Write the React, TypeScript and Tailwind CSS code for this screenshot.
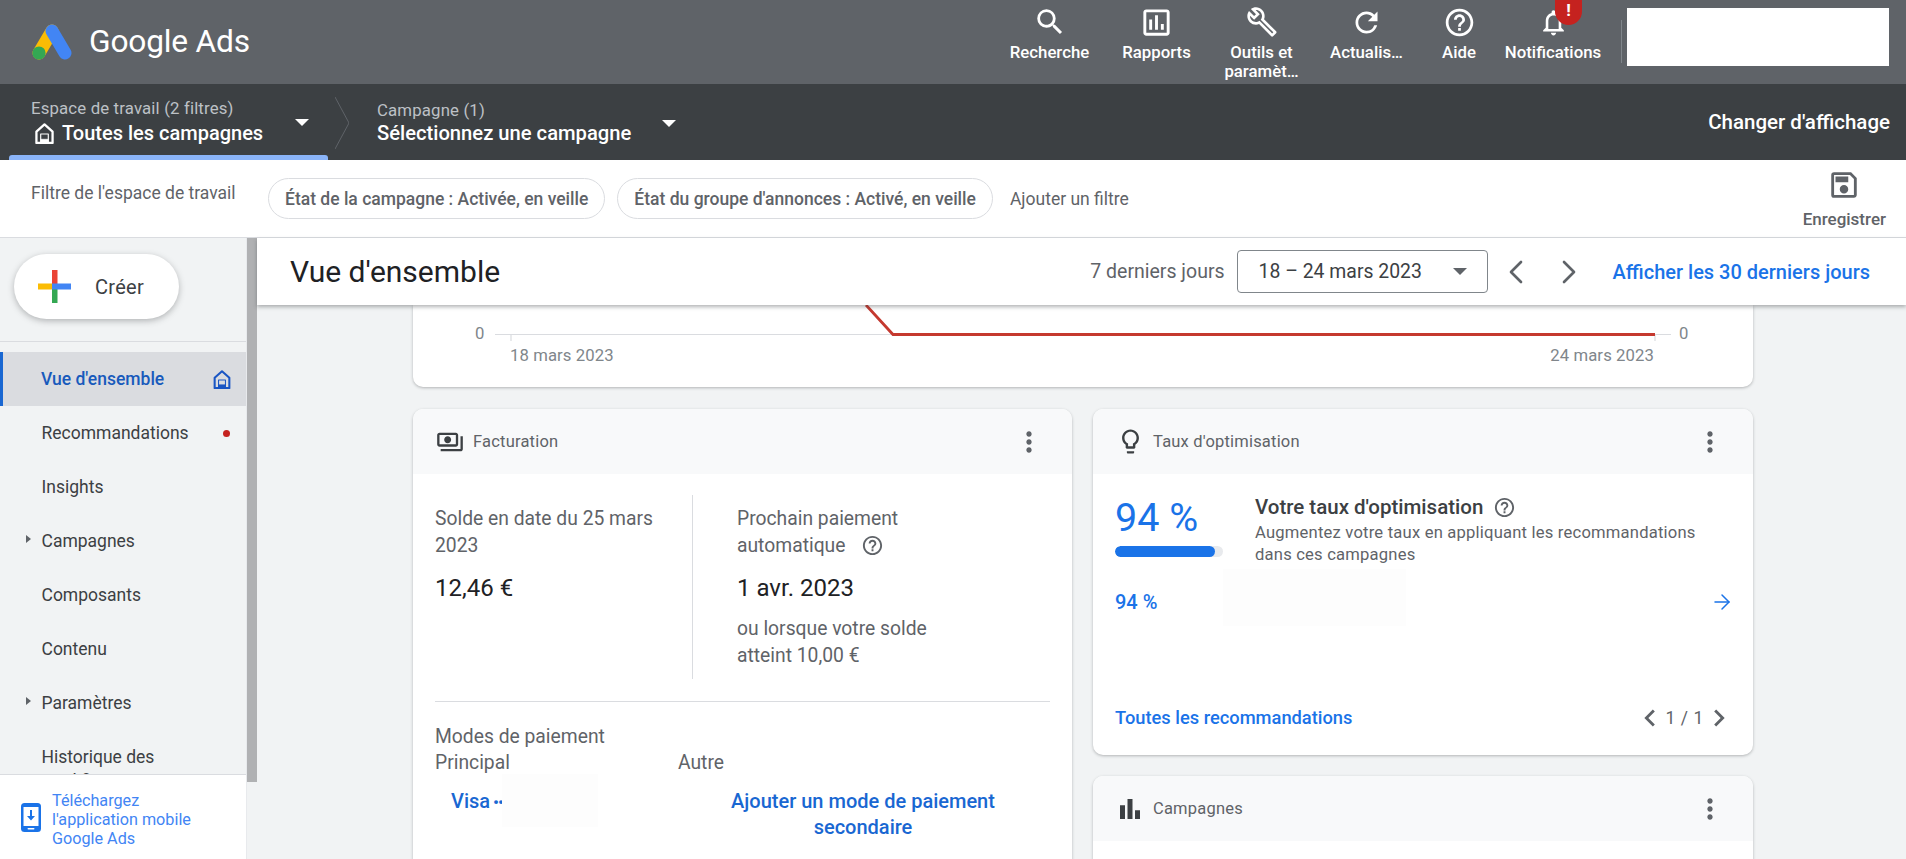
import {
  MdSearch,
  MdOutlineAssessment,
  MdOutlineBuild,
  MdRefresh,
  MdHelpOutline,
  MdNotificationsNone,
  MdOutlineSave,
  MdMoreVert,
  MdLightbulbOutline,
  MdBarChart,
  MdOutlinePayments,
  MdChevronLeft,
  MdChevronRight,
} from "react-icons/md";
import { ArrowRight, ChevronLeft, ChevronRight } from "lucide-react";
import type { ReactNode } from "react";

const topActions = [
  { label: "Recherche", icon: <MdSearch className="w-[34px] h-[34px]" />, w: "w-[107px]" },
  { label: "Rapports", icon: <MdOutlineAssessment className="w-[35px] h-[35px]" />, w: "w-[107px]" },
  { label: "Outils et paramèt…", icon: <MdOutlineBuild className="w-[32px] h-[32px]" />, w: "w-[103px]" },
  { label: "Actualis…", icon: <MdRefresh className="w-[33px] h-[33px]" />, w: "w-[107px]" },
  { label: "Aide", icon: <MdHelpOutline className="w-[33px] h-[33px]" />, w: "w-[78px]" },
];

const navItems = [
  { label: "Recommandations", dot: true },
  { label: "Insights" },
  { label: "Campagnes", arrow: true },
  { label: "Composants" },
  { label: "Contenu" },
  { label: "Paramètres", arrow: true },
  { label: "Historique des modifications" },
];

function Caret({ className }: { className: string }) {
  return <span className={`w-0 h-0 border-x-[7px] border-x-transparent border-t-[7px] ${className}`} />;
}

function HomeIcon({ className }: { className: string }) {
  return (
    <svg viewBox="2 1 20 22" className={className} fill="none" stroke="currentColor" strokeLinejoin="round">
      <path d="M12 2.5 3.5 10v12h17V10z" strokeWidth="2.4" />
      <path d="M8 21v-8.5h8V21" strokeWidth="1.2" />
      <path d="M8 18h8v4H8z" fill="currentColor" strokeWidth="0.5" />
    </svg>
  );
}

function GoogleAdsLogo() {
  return (
    <svg viewBox="0 0 40 36" className="w-[40px] h-[36px]">
      <line x1="20" y1="7" x2="7" y2="29" stroke="#fbbc04" strokeWidth="13" strokeLinecap="round" />
      <line x1="20" y1="7" x2="33" y2="29" stroke="#4285f4" strokeWidth="13" strokeLinecap="round" />
      <circle cx="7" cy="29" r="6.6" fill="#34a853" />
    </svg>
  );
}

function PlusIcon() {
  return (
    <svg viewBox="0 0 33 33" className="w-[33px] h-[33px]">
      <rect x="0" y="13.5" width="14" height="6" fill="#fbbc04" />
      <rect x="14" y="0" width="5.5" height="14" fill="#ea4335" />
      <rect x="14" y="19" width="5.5" height="14" fill="#34a853" />
      <rect x="14" y="13.5" width="19" height="6" fill="#4285f4" />
    </svg>
  );
}

function PhoneDownloadIcon() {
  return (
    <svg viewBox="0 0 20 29" className="w-[20px] h-[29px] shrink-0">
      <rect width="20" height="29" rx="3.5" fill="#1a73e8" />
      <rect x="2.5" y="4" width="15" height="19" fill="#fff" />
      <path d="M9 7h2v6h3l-4 4.5L6 13h3z" fill="#1a73e8" />
      <rect x="6.5" y="25" width="7" height="1.6" rx="0.8" fill="#fff" />
    </svg>
  );
}

function TopBar() {
  return (
    <div className="h-[84px] bg-[#5f6368] flex items-start shrink-0">
      <div className="flex items-center pl-[32px] pt-[23px] gap-[17px]">
        <GoogleAdsLogo />
        <span className="text-[31.7px] leading-[38px] text-white tracking-[-0.2px]">Google Ads</span>
      </div>
      <div className="ml-auto flex items-start">
        {topActions.map((a) => (
          <div key={a.label} className={`${a.w} flex flex-col items-center text-white pt-[5px]`}>
            <span className="h-[34px] flex items-center">{a.icon}</span>
            <span className="mt-[4px] text-[16.8px] leading-[19px] font-medium text-center px-[4px]">{a.label}</span>
          </div>
        ))}
        <div className="relative w-[110px] flex flex-col items-center text-white pt-[5px]">
          <span className="h-[34px] flex items-center">
            <MdNotificationsNone className="w-[31px] h-[31px]" />
          </span>
          <span className="mt-[4px] text-[16.8px] leading-[19px] font-medium">Notifications</span>
          <span className="absolute left-[57px] top-0 w-[27px] h-[25px] rounded-b-full rounded-t-[10px] bg-[#c5221f] text-white text-[17px] font-bold leading-[20px] text-center">!</span>
        </div>
        <div className="w-px h-[43px] bg-[#80868b] mt-[20px] ml-[13px]" />
        <div className="w-[262px] h-[58px] bg-white mt-[8px] ml-[5px] mr-[17px]" />
      </div>
    </div>
  );
}

function WorkspaceBar() {
  return (
    <div className="h-[76px] bg-[#3c4043] flex items-start shrink-0 text-white">
      <div className="relative w-[319px] h-full ml-[9px]">
        <div className="pl-[22px] pt-[13px]">
          <div className="text-[16.8px] leading-[22px] text-[#bdc1c6] tracking-[0.15px]">Espace de travail (2 filtres)</div>
          <div className="flex items-center gap-[8px] pl-[4px] mt-[1px]">
            <HomeIcon className="w-[19px] h-[21px]" />
            <span className="text-[20px] leading-[26px] font-medium">Toutes les campagnes</span>
          </div>
        </div>
        <Caret className="absolute left-[286px] top-[35px] border-t-white" />
        <div className="absolute left-0 right-0 bottom-0 h-[5px] bg-[#8ab4f8] rounded-t-[3px]" />
      </div>
      <svg viewBox="0 0 14 52" className="w-[14px] h-[52px] mt-[13px] ml-[7px]" fill="none" stroke="#5f6368" strokeWidth="1">
        <path d="M0 0 L14 26 L0 52" />
      </svg>
      <div className="pl-[28px] pt-[15px]">
        <div className="text-[16.8px] leading-[22px] text-[#bdc1c6] tracking-[0.15px]">Campagne (1)</div>
        <div className="text-[20.2px] leading-[26px] font-medium -mt-[1px]">Sélectionnez une campagne</div>
      </div>
      <Caret className="mt-[36px] ml-[31px] border-t-white" />
      <span className="ml-auto mr-[16px] mt-[25px] text-[20.5px] leading-[26px] font-medium">Changer d'affichage</span>
    </div>
  );
}

function Chip({ children }: { children: ReactNode }) {
  return (
    <span className="h-[41px] rounded-full border border-[#dadce0] px-[16px] pt-[1px] flex items-center text-[17.5px] font-medium text-[#5f6368] whitespace-nowrap">
      {children}
    </span>
  );
}

function FilterBar() {
  return (
    <div className="h-[78px] bg-white border-b border-[#dadce0] flex items-start shrink-0">
      <span className="ml-[31px] mt-[22px] w-[237px] text-[17.5px] leading-[22px] text-[#5f6368] whitespace-nowrap">Filtre de l'espace de travail</span>
      <div className="flex items-center gap-[12px] mt-[18px]">
        <Chip>État de la campagne : Activée, en veille</Chip>
        <Chip>État du groupe d'annonces : Activé, en veille</Chip>
        <span className="ml-[5px] pt-[1px] text-[17.5px] text-[#5f6368]">Ajouter un filtre</span>
      </div>
      <div className="ml-auto mr-[20px] flex flex-col items-center text-[#5f6368] pt-[8px]">
        <MdOutlineSave className="w-[34px] h-[34px]" />
        <span className="mt-[7px] text-[17px] leading-[20px] font-medium">Enregistrer</span>
      </div>
    </div>
  );
}

function Sidebar() {
  return (
    <aside className="w-[247px] shrink-0 bg-[#f1f3f4] flex flex-col border-r border-[#e8eaed]">
      <div className="h-[104px] shrink-0 border-b border-[#dadce0] pl-[14px] pt-[16px]">
        <div className="w-[165px] h-[65px] bg-white rounded-full shadow-[0_2px_6px_rgba(60,64,67,.35)] flex items-center pl-[24px] gap-[24px]">
          <PlusIcon />
          <span className="text-[20px] tracking-[0.3px] text-[#3c4043]">Créer</span>
        </div>
      </div>
      <nav className="flex-1 overflow-hidden pt-[10px] text-[17.5px] text-[#3c4043]">
        <div className="h-[54px] bg-[#dadce0] border-l-[3.5px] border-[#1967d2] flex items-center pl-[38px] pr-[15px] text-[#185abc] font-medium">
          <span className="flex-1">Vue d'ensemble</span>
          <HomeIcon className="w-[18px] h-[19px] text-[#1a56c4]" />
        </div>
        {navItems.map((item) => (
          <div key={item.label} className="relative h-[54px] flex items-start pl-[41.5px] pr-[15px] pt-[15px]">
            {item.arrow && (
              <span className="absolute left-[26px] top-[21px] w-0 h-0 border-y-[4.5px] border-y-transparent border-l-[5px] border-l-[#5f6368]" />
            )}
            <span className="flex-1 leading-[24px]">{item.label}</span>
            {item.dot && <span className="w-[7px] h-[7px] rounded-full bg-[#c5221f] mr-[1px] mt-[9px]" />}
          </div>
        ))}
      </nav>
      <div className="h-[85px] shrink-0 bg-white border-t border-[#dadce0] flex items-center pl-[21px] gap-[11px]">
        <PhoneDownloadIcon />
        <span className="text-[16.2px] leading-[19px] text-[#4285f4] mt-[5px]">
          Téléchargez
          <br />
          l'application mobile
          <br />
          Google Ads
        </span>
      </div>
    </aside>
  );
}

function CardHeader({ icon, title }: { icon: ReactNode; title: string }) {
  return (
    <div className="h-[65px] bg-[#f8f9fa] flex items-center pl-[22px] pr-[27px] shrink-0">
      <span className="w-[30px] flex justify-center text-[#3c4043]">{icon}</span>
      <span className="ml-[8px] flex-1 text-[16.5px] text-[#5f6368] tracking-[0.2px] pt-[1px]">{title}</span>
      <MdMoreVert className="w-[32px] h-[32px] text-[#5f6368]" />
    </div>
  );
}

function ChartCard() {
  return (
    <div className="h-[82px] bg-white rounded-b-[10px] shadow-[0_1px_3px_rgba(60,64,67,.35)] text-[#80868b] text-[16.7px] shrink-0 pl-[62px] pr-[64px]">
      <div className="flex h-[42px]">
        <span className="w-[20px] pt-[19px] leading-[20px]">0</span>
        <svg viewBox="0 0 1176 42" className="flex-1 h-[42px]" fill="none">
          <path d="M0 29.5 H1176 M16 29 V36 M1160 29 V36" stroke="#dadce0" strokeWidth="1.2" />
          <path d="M371 1 L398 30.5 H1160" stroke="#4285f4" strokeWidth="1" opacity="0.6" />
          <path d="M371 0 L398 29.5 H1160" stroke="#c5392f" strokeWidth="2.8" />
        </svg>
        <span className="w-[18px] pl-[8px] pt-[19px] leading-[20px]">0</span>
      </div>
      <div className="flex justify-between pl-[35px] pr-[35px] leading-[20px] -mt-[1px] tracking-[0.1px]">
        <span>18 mars 2023</span>
        <span>24 mars 2023</span>
      </div>
    </div>
  );
}

function BillingCard() {
  return (
    <div className="w-[659px] h-[600px] bg-white rounded-[10px] shadow-[0_1px_3px_rgba(60,64,67,.35)] overflow-hidden shrink-0">
      <CardHeader icon={<MdOutlinePayments className="w-[28px] h-[28px]" />} title="Facturation" />
      <div className="px-[22px] pt-[21px]">
        <div className="flex h-[184px]">
          <div className="w-[258px] pt-[10px] border-r border-[#dadce0] pr-[20px]">
            <div className="text-[19.3px] leading-[27px] text-[#5f6368]">Solde en date du 25 mars 2023</div>
            <div className="mt-[14px] text-[24px] leading-[30px] text-[#202124]">12,46 €</div>
          </div>
          <div className="pl-[44px] pt-[10px] w-[284px]">
            <div className="text-[19.3px] leading-[27px] text-[#5f6368]">
              Prochain paiement
              <br />
              automatique
              <MdHelpOutline className="inline w-[23px] h-[23px] ml-[16px] -mt-[2px]" />
            </div>
            <div className="mt-[14px] text-[24px] leading-[30px] text-[#202124]">1 avr. 2023</div>
            <div className="mt-[12px] text-[19.3px] leading-[27px] text-[#5f6368]">ou lorsque votre solde atteint 10,00 €</div>
          </div>
        </div>
        <div className="mt-[22px] border-t border-[#dadce0] pt-[22px] text-[19.3px] leading-[26px] text-[#5f6368]">
          <div>Modes de paiement</div>
          <div className="flex">
            <span className="w-[243px]">Principal</span>
            <span>Autre</span>
          </div>
          <div className="flex mt-[12px] text-[20px] text-[#1967d2] font-medium leading-[26px]">
            <div className="w-[227px] pl-[16px] flex items-start">
              <span className="whitespace-nowrap">Visa</span>
              <span className="ml-[3px] pt-[1px] text-[17px] tracking-[-1px] whitespace-nowrap">••</span>
              <span className="w-[96px] h-[53px] bg-[#fdfdfd] -mt-[14px] -ml-[1px]" />
            </div>
            <div className="w-[320px] ml-[41px] text-center">Ajouter un mode de paiement secondaire</div>
          </div>
        </div>
      </div>
    </div>
  );
}

function OptimizationCard() {
  return (
    <div className="h-[346px] bg-white rounded-[10px] shadow-[0_1px_3px_rgba(60,64,67,.35)] overflow-hidden flex flex-col shrink-0">
      <CardHeader icon={<MdLightbulbOutline className="w-[29px] h-[29px]" />} title="Taux d'optimisation" />
      <div className="px-[22px] flex-1 flex flex-col">
        <div className="flex pt-[21px]">
          <div className="w-[140px] shrink-0">
            <div className="text-[39.5px] leading-[44px] text-[#1a73e8] pt-[1px]">94 %</div>
            <div className="mt-[6px] w-[108px] h-[11px] rounded-full bg-[#e8eaed] overflow-hidden">
              <div className="h-full w-[100px] rounded-full bg-[#1a73e8]" />
            </div>
          </div>
          <div className="flex-1">
            <div className="flex items-center leading-[24px] text-[20.5px] font-medium text-[#3c4043]">
              Votre taux d'optimisation
              <MdHelpOutline className="w-[23px] h-[23px] ml-[10px] text-[#5f6368]" />
            </div>
            <div className="mt-[3px] text-[16.6px] leading-[22px] text-[#5f6368] tracking-[0.2px]">
              Augmentez votre taux en appliquant les recommandations dans ces campagnes
            </div>
          </div>
        </div>
        <div className="flex items-start mt-[3px]">
          <span className="w-[108px] pt-[21px] text-[20px] leading-[24px] font-medium text-[#1a73e8]">94 %</span>
          <span className="w-[183px] h-[57px] bg-[#fdfdfd]" />
          <ArrowRight className="ml-auto mt-[21px] -mr-[3px] w-[24px] h-[24px] text-[#1a73e8]" strokeWidth={1.5} />
        </div>
        <div className="mt-auto pb-[20px] flex items-center">
          <span className="text-[18.3px] font-medium text-[#1a73e8]">Toutes les recommandations</span>
          <div className="ml-auto flex items-center text-[#5f6368]">
            <MdChevronLeft className="w-[34px] h-[34px] -mr-[2px]" />
            <span className="text-[17.5px] tracking-[0.6px]">1 / 1</span>
            <MdChevronRight className="w-[34px] h-[34px] -ml-[2px] -mr-[5px]" />
          </div>
        </div>
      </div>
    </div>
  );
}

function CampaignsCard() {
  return (
    <div className="h-[300px] bg-white rounded-[10px] shadow-[0_1px_3px_rgba(60,64,67,.35)] overflow-hidden shrink-0">
      <CardHeader icon={<MdBarChart className="w-[32px] h-[32px]" />} title="Campagnes" />
    </div>
  );
}

function PageHeader() {
  return (
    <div className="relative z-10 h-[67px] bg-white shadow-[0_2px_4px_rgba(60,64,67,.4)] flex items-center pl-[33px] pr-[36px] shrink-0">
      <h1 className="text-[30px] text-[#202124] flex-1 pb-[1px]">Vue d'ensemble</h1>
      <span className="text-[19.5px] text-[#5f6368]">7 derniers jours</span>
      <div className="ml-[12px] w-[251px] h-[43px] rounded-[4px] border border-[#80868b] flex items-center pl-[21px] pr-[20px] text-[19.4px] text-[#3c4043]">
        <span className="flex-1">18 – 24 mars 2023</span>
        <Caret className="border-t-[#5f6368]" />
      </div>
      <ChevronLeft className="ml-[8px] w-[40px] h-[40px] text-[#5f6368]" strokeWidth={1.6} />
      <ChevronRight className="ml-[13px] w-[40px] h-[40px] text-[#5f6368]" strokeWidth={1.6} />
      <span className="ml-[24px] text-[20px] font-medium text-[#1a73e8]">Afficher les 30 derniers jours</span>
    </div>
  );
}

export default function App() {
  return (
    <div className="h-screen w-full overflow-hidden flex flex-col bg-[#f1f3f4] font-['Roboto',sans-serif]">
      <TopBar />
      <WorkspaceBar />
      <FilterBar />
      <div className="flex-1 flex min-h-0">
        <Sidebar />
        <div className="w-[10px] h-[544px] bg-[#b0b1b3] shrink-0" />
        <main className="flex-1 min-w-0 flex flex-col">
          <PageHeader />
          <div className="flex-1 overflow-hidden pl-[156px] pr-[153px] flex flex-col">
            <ChartCard />
            <div className="flex gap-[21px] mt-[22px]">
              <BillingCard />
              <div className="flex-1 flex flex-col gap-[21px]">
                <OptimizationCard />
                <CampaignsCard />
              </div>
            </div>
          </div>
        </main>
      </div>
    </div>
  );
}
